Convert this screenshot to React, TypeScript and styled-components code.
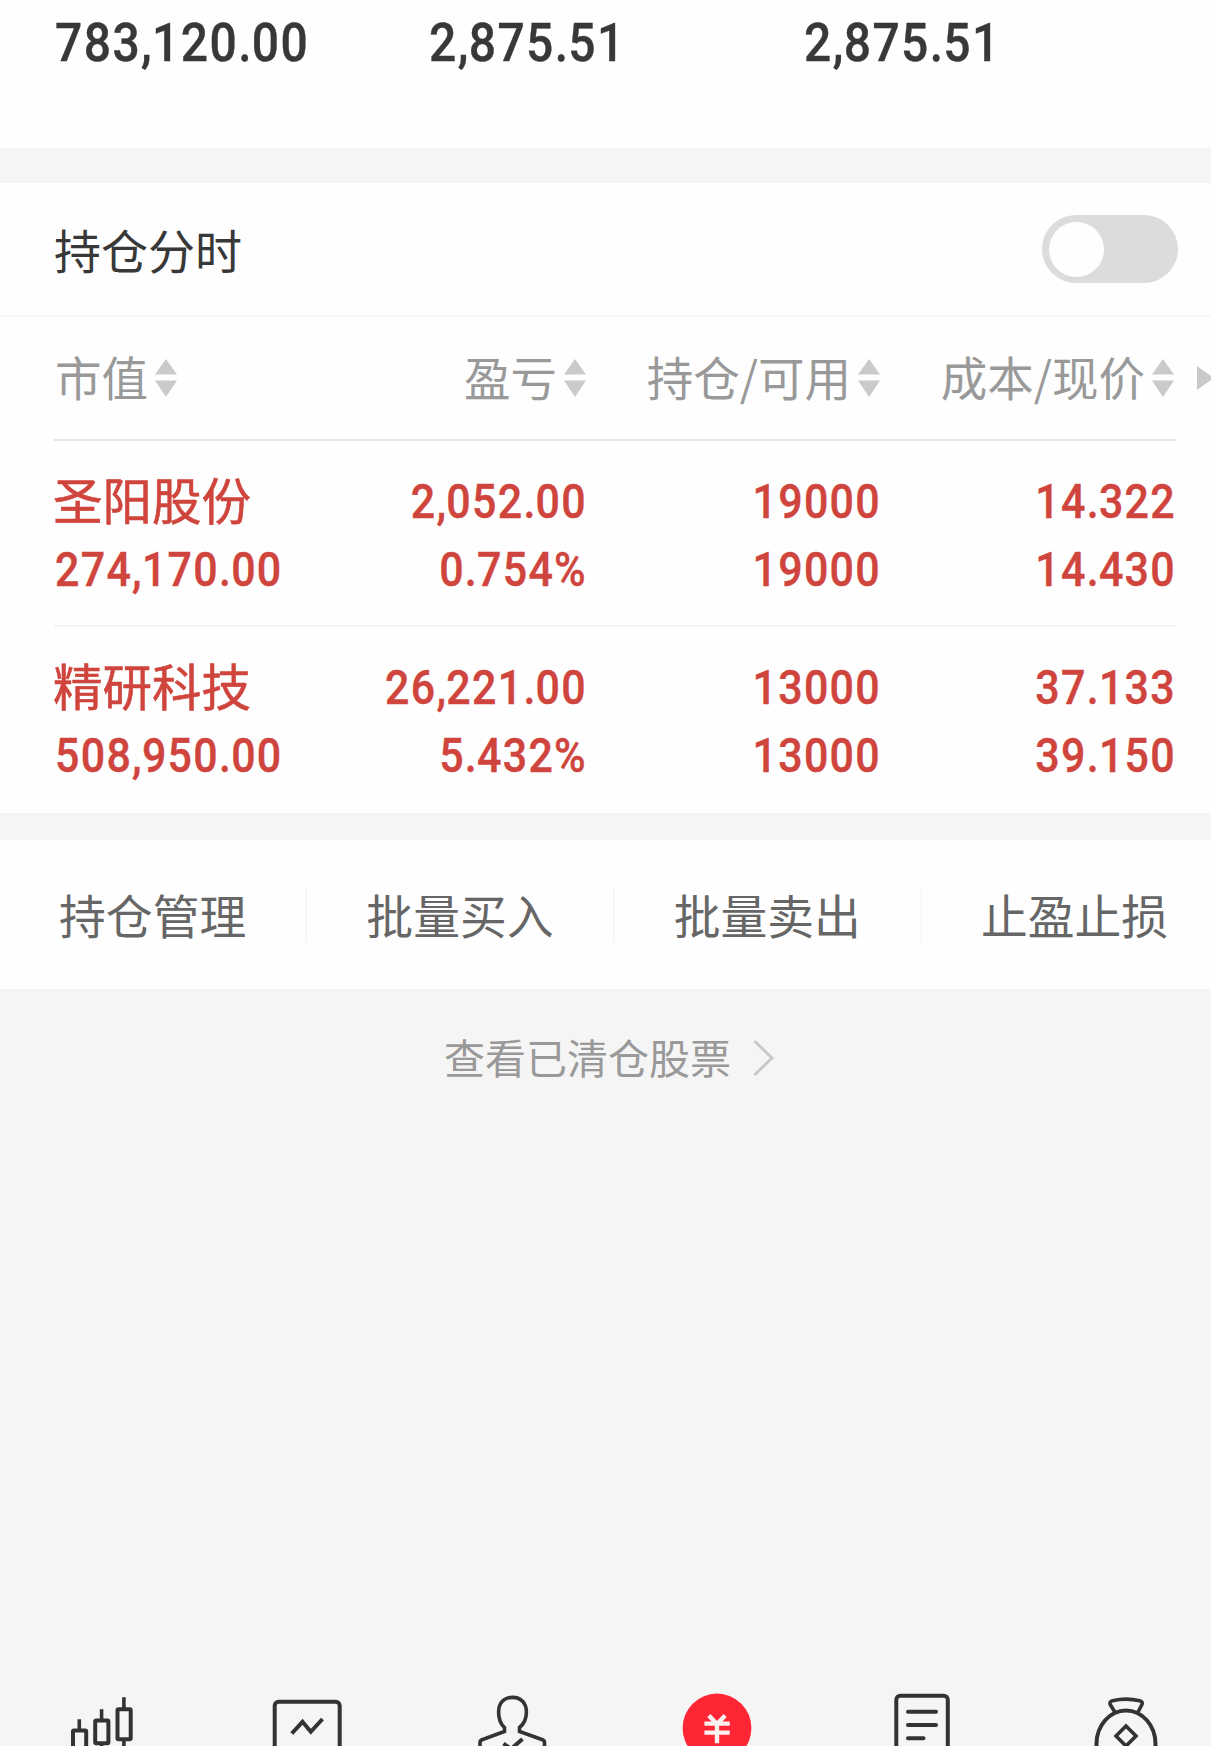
import React from "react";
import styled, { createGlobalStyle } from "styled-components";

const GlobalStyle = createGlobalStyle`
  * { box-sizing: border-box; }
  body {
    margin: 0;
    background: #f5f5f5;
    overflow: hidden;
    font-family: "Noto Sans CJK SC", "Noto Sans", sans-serif;
  }
`;

const Page = styled.main`
  display: flex;
  flex-direction: column;
  width: 1211px;
  height: 1746px;
  overflow: hidden;
  background: #f5f5f5;
`;

const Panel = styled.section<{ $gap?: number }>`
  flex: none;
  background: #fefefe;
  margin-bottom: ${(p) => p.$gap ?? 0}px;
`;

const Summary = styled.div`
  display: grid;
  grid-template-columns: 374px 375px 1fr;
  height: 148px;
  padding: 12px 0 0 54px;
`;

const NumText = styled.span<{ $size: number; $right?: boolean }>`
  display: block;
  font-family: Roboto, "Liberation Sans", sans-serif;
  font-weight: 500;
  font-size: ${(p) => p.$size}px;
  line-height: 60px;
  letter-spacing: 0.03em;
  white-space: nowrap;
  text-align: ${(p) => (p.$right ? "right" : "left")};
  margin-right: ${(p) => (p.$right ? "-1px" : "0")};
  margin-left: ${(p) => (p.$right ? "0" : "1px")};
  transform: scaleX(0.88);
  transform-origin: ${(p) => (p.$right ? "right" : "left")} center;
  -webkit-text-stroke: 0.4px currentColor;
`;

const Sep = styled.span`
  letter-spacing: 0.005em;
`;

const SummaryNum = styled.div`
  color: #383838;
`;

const ToggleRow = styled.div`
  display: flex;
  align-items: center;
  justify-content: space-between;
  height: 134px;
  padding: 0 33px 0 54px;
  border-bottom: 2px solid #f8f8f8;
`;

const Title = styled.h2`
  margin: -1px 0 0;
  font-weight: 400;
  font-size: 47px;
  line-height: 60px;
  color: #383838;
`;

const Toggle = styled.button`
  display: flex;
  align-items: center;
  width: 136px;
  height: 68px;
  padding: 0 7px;
  border: 0;
  border-radius: 34px;
  background: #dcdcdc;
`;

const Knob = styled.span`
  width: 55px;
  height: 55px;
  border-radius: 50%;
  background: #fefefe;
`;

const HeaderRow = styled.div`
  display: grid;
  grid-template-columns: 532px 294px 294px 1fr;
  align-items: center;
  height: 122px;
  padding-left: 54px;
`;

const HeadFirst = styled.div`
  display: grid;
  grid-template-columns: 1fr 1fr;
`;

const HeadCellBox = styled.div<{ $right?: boolean }>`
  display: flex;
  align-items: center;
  justify-content: ${(p) => (p.$right ? "flex-end" : "flex-start")};
  gap: 7px;
  padding-left: ${(p) => (p.$right ? 0 : 1)}px;
  color: #999;
  white-space: nowrap;
`;

const HeadLabel = styled.span`
  margin-top: -4px;
  font-size: 46.5px;
  line-height: 60px;
`;

const More = styled.div`
  display: flex;
  padding-left: 23px;
`;

const Rows = styled.div`
  margin: 0 35px 0 54px;
  border-top: 2px solid #e6e6e6;
`;

const Row = styled.div`
  display: grid;
  grid-template-columns: 266px 266px 294px 295px;
  height: 184px;
  padding-top: 27px;
  & + & {
    height: 188px;
    border-top: 2px solid #f2f2f2;
  }
`;

const Cell = styled.div`
  display: grid;
  grid-template-rows: 68px 68px;
  align-items: center;
  color: #cf453d;
`;

const Name = styled.span`
  margin: -7px 0 0 -1px;
  font-size: 49.5px;
  line-height: 60px;
  white-space: nowrap;
  -webkit-text-stroke: 0.6px #cf453d;
`;

const Actions = styled.nav`
  display: flex;
  align-items: center;
  height: 149px;
  overflow: hidden;
`;

const Action = styled.a`
  flex: 0 0 307.3px;
  height: 56px;
  border-right: 2px solid #f8f8f8;
  font-size: 46.8px;
  line-height: 54px;
  text-align: center;
  color: #666;
`;

const Cleared = styled.a`
  display: flex;
  align-items: center;
  justify-content: center;
  gap: 22px;
  height: 60px;
  margin-top: 37px;
  padding-left: 7px;
  font-size: 41px;
  line-height: 58px;
  color: #999;
`;

const Chevron = styled.svg`
  margin-top: 4px;
  fill: none;
  stroke: #c8c8c8;
  stroke-width: 2.8;
`;

const TabBar = styled.nav`
  display: flex;
  flex: none;
  margin-top: auto;
  height: 56px;
  overflow: hidden;
`;

const Tab = styled.a`
  display: flex;
  flex: 0 0 204.8px;
  justify-content: center;
`;

const TabSvg = styled.svg`
  display: block;
  flex: none;
  fill: none;
  stroke: #333;
  stroke-width: 4;
`;

const Num = ({ size, right, value }: { size: number; right?: boolean; value: string }) => (
  <NumText $size={size} $right={right}>
    {value.split(/([.,])/).map((part, i) => (i % 2 ? <Sep key={i}>{part}</Sep> : part))}
  </NumText>
);

const HeadCell = ({ label, right }: { label: string; right?: boolean }) => (
  <HeadCellBox $right={right}>
    <HeadLabel>{label}</HeadLabel>
    <svg width="22" height="38" viewBox="0 0 22 38" fill="#cacaca">
      <path d="M11 0 22 15.5H0zM0 21.5H22L11 38z" />
    </svg>
  </HeadCellBox>
);

const Icon = ({ children }: { children: React.ReactNode }) => (
  <Tab>
    <TabSvg width="72" height="56" viewBox="0 0 72 56">
      {children}
    </TabSvg>
  </Tab>
);

const totals = ["783,120.00", "2,875.51", "2,875.51"];

const holdings = [
  { name: "圣阳股份", value: "274,170.00", cols: [["2,052.00", "0.754%"], ["19000", "19000"], ["14.322", "14.430"]] },
  { name: "精研科技", value: "508,950.00", cols: [["26,221.00", "5.432%"], ["13000", "13000"], ["37.133", "39.150"]] },
];

const actions = ["持仓管理", "批量买入", "批量卖出", "止盈止损"];

export default function App() {
  return (
    <Page>
      <GlobalStyle />
      <Panel $gap={35}>
        <Summary>
          {totals.map((t, i) => (
            <SummaryNum key={i}>
              <Num size={54.5} value={t} />
            </SummaryNum>
          ))}
        </Summary>
      </Panel>
      <Panel $gap={27}>
        <ToggleRow>
          <Title>持仓分时</Title>
          <Toggle aria-label="持仓分时">
            <Knob />
          </Toggle>
        </ToggleRow>
        <HeaderRow>
          <HeadFirst>
            <HeadCell label="市值" />
            <HeadCell label="盈亏" right />
          </HeadFirst>
          <HeadCell label="持仓/可用" right />
          <HeadCell label="成本/现价" right />
          <More>
            <svg width="15" height="24" viewBox="0 0 15 24" fill="#cacaca">
              <path d="M0 0 17 12 0 24z" />
            </svg>
          </More>
        </HeaderRow>
        <Rows>
          {holdings.map((h) => (
            <Row key={h.name}>
              <Cell>
                <Name>{h.name}</Name>
                <Num size={48.8} value={h.value} />
              </Cell>
              {h.cols.map((c, i) => (
                <Cell key={i}>
                  <Num size={48.8} right value={c[0]} />
                  <Num size={48.8} right value={c[1]} />
                </Cell>
              ))}
            </Row>
          ))}
        </Rows>
      </Panel>
      <Panel>
        <Actions>
          {actions.map((a) => (
            <Action key={a}>{a}</Action>
          ))}
        </Actions>
      </Panel>
      <Cleared>
        查看已清仓股票
        <Chevron width="21" height="38" viewBox="0 0 21 38">
          <path d="M1.5 2 19 19 1.5 36" />
        </Chevron>
      </Cleared>
      <TabBar>
        <Icon>
          <path d="M13.3 29.3V40M35.6 19.3V30M35.6 53v5M57.9 7.3V18M57.9 50v8" strokeWidth="3.6" />
          <rect x="7" y="40.4" width="13.2" height="26" rx="1" />
          <rect x="29.2" y="30.4" width="13.2" height="22.8" rx="1" />
          <rect x="51.5" y="19.2" width="13.2" height="30" rx="1" />
        </Icon>
        <Icon>
          <rect x="3.7" y="11.8" width="65" height="60" rx="4" />
          <path d="M20.8 43.5 31.5 31.8 39.8 41.8 51.5 29" />
        </Icon>
        <Icon>
          <path
            d="M4 60V52.5Q4 50.5 6 49.8L28.5 41.5V37.5C24.5 34 22.6 29 22.6 22C22.6 13 28 7.4 36.4 7.4S50.4 13 50.4 22C50.4 29 48 34 43.5 37.5V41.5L66.5 49.8Q68.5 50.5 68.5 52.5V60"
            strokeWidth="3.6"
          />
          <path d="M27.5 53.5 35 59 46.5 49" />
        </Icon>
        <Icon>
          <circle cx="36" cy="38" r="34.4" fill="#fe2634" stroke="none" />
          <path d="M27.8 25.5 36 34 44.2 25.5M23.4 33.6H48.7M23.4 42.6H48.7M36 33V53.2" stroke="#fbf0f0" strokeWidth="4.4" />
        </Icon>
        <Icon>
          <rect x="10.3" y="5.7" width="51.5" height="66" rx="4" />
          <path d="M22 21.7H50M22 35H50M22 48.3H37.5" strokeLinecap="round" />
        </Icon>
        <Icon>
          <path d="M25.5 23 20.5 15Q18.8 11.6 22.5 10.7Q36 7.6 49.8 10.7Q53.4 11.6 51.7 15L47.5 23" strokeWidth="3.6" />
          <ellipse cx="36" cy="54" rx="29.5" ry="33.6" />
          <path d="M36 36 46 46 36 56 26 46z" strokeWidth="3.6" />
        </Icon>
      </TabBar>
    </Page>
  );
}
